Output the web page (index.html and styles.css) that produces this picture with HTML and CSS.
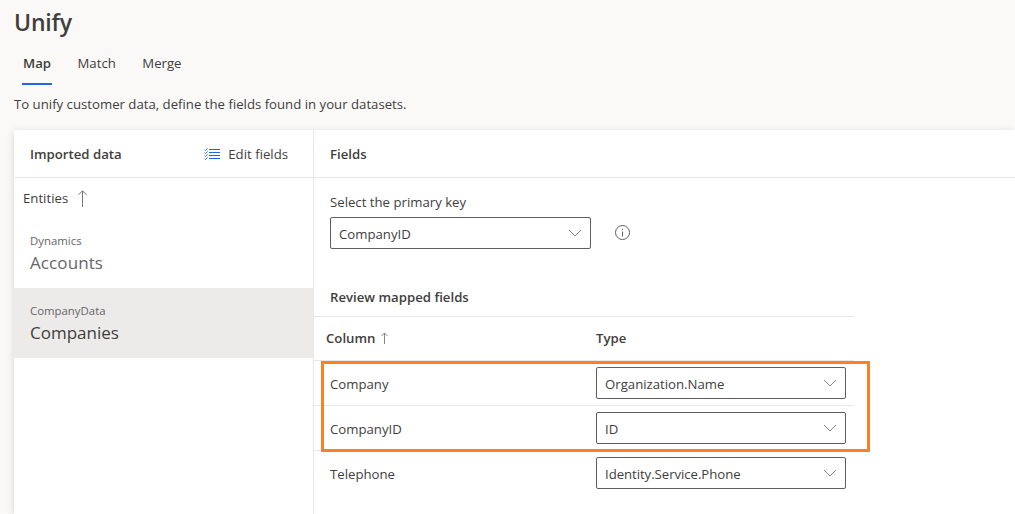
FILE: index.html
```html
<!DOCTYPE html>
<html lang="en">
<head>
<meta charset="utf-8">
<title>Unify</title>
<link rel="stylesheet" href="styles.css">
</head>
<body>
<header class="page-header">
  <h1 class="title">Unify</h1>
  <nav class="tabs">
    <a class="tab tab-active">Map</a>
    <a class="tab">Match</a>
    <a class="tab">Merge</a>
  </nav>
  <p class="intro">To unify customer data, define the fields found in your datasets.</p>
</header>
<main class="card">
  <aside class="sidebar">
    <div class="panel-head">
      <h2 class="heading">Imported data</h2>
      <button class="edit">
        <svg width="17" height="12" viewBox="0 0 17 12" fill="none" stroke="#2266e3">
          <path d="M5 1.5h11M5 4.5h11M5 7.5h11M5 10.5h11"/>
          <path stroke-width=".9" d="M.4 1.6l1 1L3.6.4M.4 4.6l1 1 2.2-2.2M.4 7.6l1 1 2.2-2.2M.4 10.6l1 1 2.2-2.2"/>
        </svg>
        <span>Edit fields</span>
      </button>
    </div>
    <div class="entities">
      <span>Entities</span>
      <svg width="9" height="17" viewBox="0 0 9 17" fill="none" stroke="#777"><path d="M4.5 17V1M.5 4.8l4-4 4 4"/></svg>
    </div>
    <div class="entity">
      <span class="source">Dynamics</span>
      <span class="name accounts">Accounts</span>
    </div>
    <div class="entity entity-selected">
      <span class="source">CompanyData</span>
      <span class="name">Companies</span>
    </div>
  </aside>
  <section class="content">
    <div class="panel-head"><h2 class="heading">Fields</h2></div>
    <div class="key">
      <label class="key-label">Select the primary key</label>
      <div class="key-row">
        <div class="select select-key"><span class="value">CompanyID</span><svg class="chevron" width="14" height="8" viewBox="0 0 14 8"><path d="M1 1l6 6 6-6"/></svg></div>
        <svg class="info" width="15" height="15" viewBox="0 0 15 15" fill="none" stroke="#605e5c"><circle cx="7.5" cy="7.5" r="7"/><path d="M7.5 6.5v5M7.5 3.8v1.2"/></svg>
      </div>
    </div>
    <h2 class="heading review">Review mapped fields</h2>
    <div class="table">
      <div class="row row-head">
        <div class="column-head"><span>Column</span>
          <svg width="7" height="12" viewBox="0 0 7 12" fill="none" stroke="#858585"><path d="M3.5 12V1M.5 4l3-3 3 3"/></svg>
        </div>
        <span>Type</span>
      </div>
      <div class="row">
        <span class="field">Company</span>
        <div class="select"><span class="value">Organization.Name</span><svg class="chevron" width="14" height="8" viewBox="0 0 14 8"><path d="M1 1l6 6 6-6"/></svg></div>
      </div>
      <div class="row">
        <span class="field">CompanyID</span>
        <div class="select"><span class="value">ID</span><svg class="chevron" width="14" height="8" viewBox="0 0 14 8"><path d="M1 1l6 6 6-6"/></svg></div>
      </div>
      <div class="row row-last">
        <span class="field">Telephone</span>
        <div class="select"><span class="value identity">Identity.Service.Phone</span><svg class="chevron" width="14" height="8" viewBox="0 0 14 8"><path d="M1 1l6 6 6-6"/></svg></div>
      </div>
      <div class="highlight"></div>
    </div>
  </section>
</main>
</body>
</html>
```
FILE: styles.css
```css
* { box-sizing: border-box; }
body {
  margin: 0;
  height: 514px;
  overflow: hidden;
  display: flex;
  flex-direction: column;
  background: #faf9f8;
  color: #3f3e3d;
  font: 13.2px/20px "Open Sans", "Noto Sans", sans-serif;
}
h1, h2, p { margin: 0; }
svg { display: block; flex: none; }
.page-header { height: 130px; flex: none; padding: 5px 14px 0; }
.title { font-size: 23px; line-height: 35px; font-weight: 600; letter-spacing: -.2px; padding-bottom: 0; margin-bottom: 0; }
.tabs { display: flex; height: 45px; padding: 0 8px; gap: 24.5px; }
.tab { height: 45px; padding: 13px 1px 0; }
.tab-active { font-weight: 600; border-bottom: 2px solid #2266e3; width: 30px; }
.intro { padding-top: 9px; white-space: nowrap; }
.card {
  flex: 1;
  display: flex;
  margin-left: 14px;
  background: #fff;
  border-radius: 2px 0 0 0;
  box-shadow: 0 2px 8px rgba(0, 0, 0, .14);
}
.sidebar { width: 300px; border-right: 1px solid #e8e8e8; }
.panel-head {
  height: 48px;
  display: flex;
  align-items: center;
  justify-content: space-between;
  padding: 0 25px 0 16px;
  border-bottom: 1px solid #e8e8e8;
}
.heading { font-size: 13.2px; line-height: 20px; font-weight: 600; }
.edit {
  display: flex;
  align-items: center;
  gap: 7px;
  padding: 0;
  border: 0;
  background: none;
  color: inherit;
  font: inherit;
}
.entities { display: flex; align-items: center; gap: 10px; height: 40px; padding-left: 9px; }
.entity { height: 70px; padding: 13px 16px 0; display: flex; flex-direction: column; color: #666; }
.source { font-size: 11.4px; line-height: 20px; }
.name { font-size: 17px; line-height: 24px; }
.accounts { letter-spacing: .1px; }
.entity-selected { background: #edebe9; }
.entity-selected .name { color: #3f3e3d; }
.content { flex: 1; }
.key { padding: 14px 16px 0; }
.key-label { display: block; height: 25px; }
.key-row { display: flex; align-items: flex-start; gap: 24px; }
.info { margin-top: 8px; }
.select {
  width: 250px;
  height: 32px;
  display: flex;
  align-items: center;
  justify-content: space-between;
  padding: 0 8px;
  border: 1px solid #605e5c;
  border-radius: 2px;
  background: #fff;
}
.value { padding-top: 2px; }
.identity { letter-spacing: -.05px; }
.select-key { width: 261px; }
.chevron { fill: none; stroke: #8a8886; }
.review { padding: 38px 16px 9px; }
.table { position: relative; width: 540px; border-top: 1px solid #e8e8e8; }
.row {
  height: 45px;
  display: grid;
  grid-template-columns: 266px 250px;
  align-items: center;
  padding-left: 16px;
  border-bottom: 1px solid #e8e8e8;
}
.field { padding-top: 2px; }
.row-head { height: 44px; font-weight: 600; padding-bottom: 1px; }
.row-last { height: 44px; border-bottom: 0; }
.column-head { display: flex; align-items: center; gap: 6px; margin-left: -4px; }
.highlight {
  position: absolute;
  left: 7px;
  top: 44px;
  width: 549px;
  height: 91px;
  border: 3px solid #ff7f27;
}
```
